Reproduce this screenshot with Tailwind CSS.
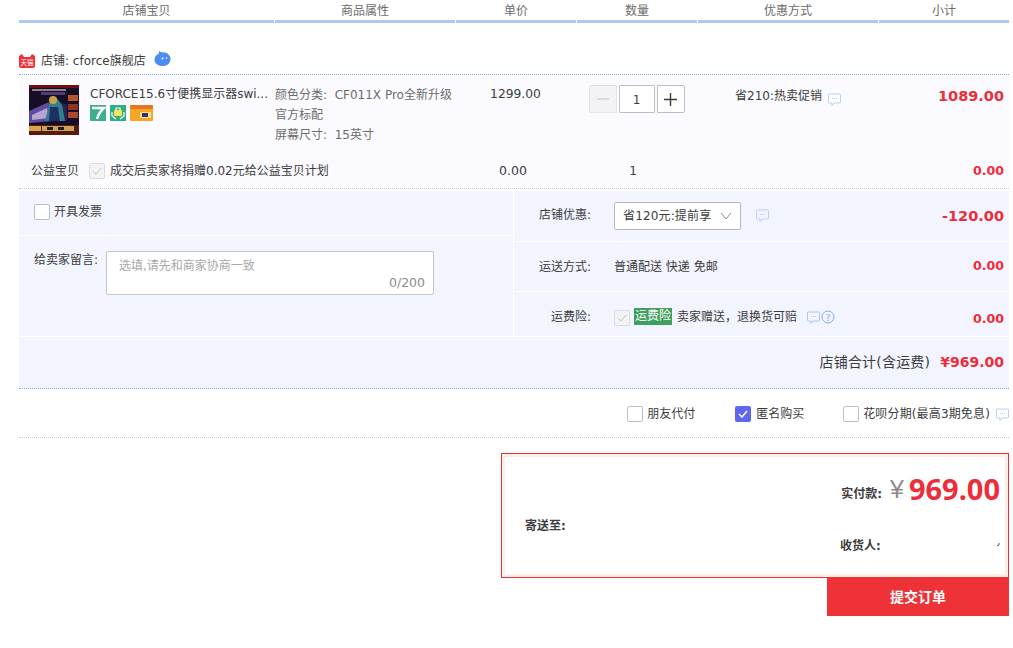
<!DOCTYPE html>
<html lang="en">
<head>
  <meta charset="UTF-8">
  <title>确认订单</title>
  <script src="https://cdn.jsdelivr.net/npm/@tailwindcss/browser@4"></script>
</head>
<body class="bg-white overflow-hidden font-['DejaVu_Sans','Noto_Sans_CJK_SC',sans-serif] text-[12px] text-[#3c3c3c]">
  <div class="w-[1013px] h-[648px] pl-[19px] pr-[4px]">

    <!-- table head -->
    <div class="flex gap-px h-[23px] text-[#6c6c6c]">
      <div class="w-[255px] h-full border-b-[3px] border-[#b2c5f9] text-center leading-[22px]">店铺宝贝</div>
      <div class="w-[180px] h-full border-b-[3px] border-[#b2c5f9] text-center leading-[22px]">商品属性</div>
      <div class="w-[120px] h-full border-b-[3px] border-[#b2c5f9] text-center leading-[22px]">单价</div>
      <div class="w-[120px] h-full border-b-[3px] border-[#b2c5f9] text-center leading-[22px]">数量</div>
      <div class="w-[180px] h-full border-b-[3px] border-[#b2c5f9] text-center leading-[22px]">优惠方式</div>
      <div class="w-[130px] h-full border-b-[3px] border-[#b2c5f9] text-center leading-[22px]">小计</div>
    </div>

    <!-- shop name -->
    <div class="flex items-center h-[52px] pt-[25px] border-b border-dotted border-[#80a0f0] text-[#3c3c3c]">
      <svg width="16" height="14" viewBox="0 0 16 14" class="mr-[6px]">
        <path d="M0 2 L3 0 L5 3 H11 L13 0 L16 2 V12 Q16 14 14 14 H2 Q0 14 0 12Z" fill="#ee3338"/>
        <text x="8" y="11" font-size="6.5" fill="#fff" text-anchor="middle">天猫</text>
      </svg>
      <span>店铺: cforce旗舰店</span>
      <svg width="17" height="17" viewBox="0 0 17 17" class="ml-[8px] -mt-[6px]">
        <path d="M5 1 Q7 2.500 9 2.200 C13 2.200 16.500 5 16.500 9 C16.500 13.500 13 16 8.500 16 C4 16 .5 13.500 .5 9.500 C.5 6.500 2.500 4.500 5 3.500Z" fill="#4f8cf0"/>
        <circle cx="8.500" cy="8.500" r="1" fill="#fff"/>
        <circle cx="12.500" cy="8" r=".8" fill="#fff"/>
      </svg>
    </div>

    <!-- item -->
    <div class="bg-[#fafaff] h-[112px] relative">
      <div class="flex h-[81px] pt-[10px]">
        <div class="w-[256px] flex pl-[10px]">
          <svg width="50" height="50" viewBox="0 0 50 50" class="shrink-0">
            <rect width="50" height="50" fill="#170d26"/>
            <rect width="50" height="3" fill="#6d0f16"/>
            <rect x="3" y="4" width="34" height="2" fill="#8f7f88"/>
            <rect x="12" y="7" width="24" height="3" fill="#4e3f78"/>
            <path d="M0 26 L20 17 L24 36 L0 38Z" fill="#5f4c9e"/>
            <path d="M3 30 L18 23 L20 33 L3 35Z" fill="#b9a4d4"/>
            <path d="M26 15 L38 20 L38 36 L26 36Z" fill="#2c2156"/>
            <path d="M16 36 L21 16 L27 12 L33 20 L36 36Z" fill="#2f7f8e"/>
            <circle cx="24" cy="15" r="4" fill="#c9a348"/>
            <path d="M21 22 L29 22 L31 36 L20 36Z" fill="#1f2f66"/>
            <rect x="39" y="10" width="10" height="6" fill="#b5562c"/>
            <rect x="39" y="19" width="10" height="6" fill="#8d3326"/>
            <rect x="39" y="27" width="10" height="6" fill="#a9482a"/>
            <rect y="40" width="50" height="10" fill="#5c1a0e"/>
            <rect y="41" width="12" height="5" fill="#d8a64a"/>
            <rect x="13" y="41" width="32" height="5" fill="#c9a35a"/>
            <rect x="18" y="42" width="6" height="3" fill="#1b1b1b"/>
            <rect x="29" y="42" width="6" height="3" fill="#1b1b1b"/>
          </svg>
          <div class="ml-[11px] min-w-0">
            <div class="leading-[18px] whitespace-nowrap">CFORCE15.6寸便携显示器swi...</div>
            <div class="flex items-start gap-[4px] mt-[2px]">
              <svg width="16" height="16" viewBox="0 0 16 16"><rect width="16" height="16" fill="#3fae8f"/><path d="M2 3 H14 Q9 7 7 14" fill="none" stroke="#fff" stroke-width="2.500"/></svg>
              <svg width="16" height="16" viewBox="0 0 16 16"><rect width="16" height="16" fill="#2fae83"/><rect x="4" y="5" width="8" height="6" rx="1" fill="#f6e35a"/><path d="M6 5 V3 H10 V5 M2 7 V11 L6 14 M14 7 V11 L10 14" fill="none" stroke="#fff" stroke-width="1.200"/></svg>
              <svg width="23" height="16" viewBox="0 0 23 16"><rect width="23" height="16" rx="1" fill="#f5a623"/><rect width="23" height="4" rx="1" fill="#e8742a"/><rect x="10" y="7" width="11" height="6" fill="#f9dd8a"/><rect x="12" y="8" width="6" height="4" fill="#33307a"/></svg>
            </div>
          </div>
        </div>
        <div class="w-[181px] text-[#6c6c6c] leading-[20px]">
          <div>颜色分类:&nbsp; CF011X Pro全新升级</div>
          <div>官方标配</div>
          <div>屏幕尺寸:&nbsp; 15英寸</div>
        </div>
        <div class="w-[121px] text-center text-[12.3px] leading-[18px] -ml-[1px]">1299.00</div>
        <div class="w-[121px] flex justify-center gap-[2px] pr-[2px] ml-[1px]">
          <div class="w-[28px] h-[28px] border border-[#e3e3e6] bg-[#f3f3f5] rounded-l-[2px] flex items-center justify-center">
            <svg width="12" height="12" viewBox="0 0 12 12"><path d="M0 6 H12" stroke="#c4c4c4" stroke-width="1"/></svg>
          </div>
          <div class="w-[36px] h-[28px] border border-[#bdbdc8] bg-white rounded-[1px] text-center leading-[28px]">1</div>
          <div class="w-[28px] h-[28px] border border-[#bdbdc8] bg-white rounded-r-[2px] flex items-center justify-center">
            <svg width="13" height="13" viewBox="0 0 13 13"><path d="M0 6.500 H13 M6.500 0 V13" stroke="#3c3c3c" stroke-width="1.400"/></svg>
          </div>
        </div>
        <div class="w-[181px] flex justify-center items-start gap-[6px] leading-[22px] pl-[9px] pr-[10px]">
          <span>省210:热卖促销</span>
          <svg width="13" height="13" viewBox="0 0 13 13" class="mt-[8px] shrink-0"><path d="M1.500 1 H11.500 Q12.500 1 12.500 2 V9 Q12.500 10 11.500 10 H6 L4 12.500 V10 H1.500 Q.5 10 .5 9 V2 Q.5 1 1.500 1Z" fill="#fff" stroke="#b8d0f5"/><path d="M4 5.500 H9" stroke="#b8d0f5" stroke-dasharray="1 1"/></svg>
        </div>
        <div class="flex-1 text-right pr-[5px] font-bold text-[14.5px] text-[#ee2d3a] leading-[22px]">1089.00</div>
      </div>
      <div class="flex items-center h-[30px]">
        <div class="w-[70px] pl-[12px] whitespace-nowrap">公益宝贝</div>
        <div class="w-[16px] h-[16px] border border-[#dcdce0] bg-[#f3f3f5] rounded-[2px] flex items-center justify-center">
          <svg width="10" height="8" viewBox="0 0 10 8"><path d="M1 4 L4 7 L9 1" fill="none" stroke="#c4c4c4" stroke-width="1"/></svg>
        </div>
        <div class="w-[375px] pl-[5px] whitespace-nowrap">成交后卖家将捐赠0.02元给公益宝贝计划</div>
        <div class="w-[70px] text-center text-[12.5px] -ml-[2px]">0.00</div>
        <div class="w-[170px] text-center">1</div>
        <div class="flex-1 text-right pr-[5px] font-bold text-[12.6px] text-[#ee2d3a]">0.00</div>
      </div>
    </div>

    <div class="border-b border-dotted border-[#c8c8c8] h-[2px]"></div>

    <!-- order options -->
    <div class="flex mt-[2px] h-[145px] bg-[#f2f4ff]">
      <div class="w-[495px] border-r border-white flex flex-col">
        <div class="h-[45px] flex items-start pl-[15px] pt-[13px] border-b border-white">
          <div class="w-[16px] h-[16px] border border-[#bdbdc8] bg-white rounded-[2px]"></div>
          <span class="ml-[4px] leading-[16px]">开具发票</span>
        </div>
        <div class="flex pl-[15px] pt-[15px]">
          <span class="w-[72px] leading-[18px]">给卖家留言:</span>
          <div class="relative w-[328px] h-[44px] bg-white border border-[#c4c4c4] rounded-[2px]">
            <span class="absolute left-[12px] top-[5px] text-[#a8a8a8]">选填,请先和商家协商一致</span>
            <span class="absolute right-[8px] bottom-[1px] text-[12.5px] text-[#8c8c8c]">0/200</span>
          </div>
        </div>
      </div>
      <div class="flex-1 flex flex-col">
        <div class="h-[51px] flex items-center border-b border-white">
          <span class="w-[77px] text-right mb-[2px]">店铺优惠:</span>
          <div class="ml-[23px] w-[127px] h-[28px] border border-[#b8b8c8] bg-white rounded-[2px] flex items-center justify-between pl-[8px] pr-[8px]">
            <span class="whitespace-nowrap tracking-[.15px]">省120元:提前享</span>
            <svg width="12" height="8" viewBox="0 0 12 8"><path d="M1 1 L6 7 L11 1" fill="none" stroke="#8c8c8c"/></svg>
          </div>
          <svg width="13" height="13" viewBox="0 0 13 13" class="ml-[15px] -mt-[1px]"><path d="M1.500 1 H11.500 Q12.500 1 12.500 2 V9 Q12.500 10 11.500 10 H6 L4 12.500 V10 H1.500 Q.5 10 .5 9 V2 Q.5 1 1.500 1Z" fill="none" stroke="#b8d0f5"/><path d="M4 5.500 H9" stroke="#b8d0f5" stroke-dasharray="1 1"/></svg>
          <span class="ml-auto pr-[5px] font-bold text-[14.5px] text-[#ee2d3a] mt-[2px]">-120.00</span>
        </div>
        <div class="h-[50px] flex items-center border-b border-white">
          <span class="w-[77px] text-right">运送方式:</span>
          <span class="ml-[23px]">普通配送 快递 免邮</span>
          <span class="ml-auto pr-[5px] font-bold text-[12.6px] text-[#ee2d3a]">0.00</span>
        </div>
        <div class="flex-1 flex items-center pt-[6px]">
          <span class="w-[77px] text-right">运费险:</span>
          <div class="ml-[23px] mt-[2px] w-[16px] h-[16px] border border-[#dcdce0] bg-[#f3f3f5] rounded-[2px] flex items-center justify-center">
            <svg width="10" height="8" viewBox="0 0 10 8"><path d="M1 4 L4 7 L9 1" fill="none" stroke="#c4c4c4" stroke-width="1"/></svg>
          </div>
          <span class="ml-[4px] px-px bg-[#3f9f5f] text-white leading-[17px] h-[17px] -mt-[1px]">运费险</span>
          <span class="ml-[5px] whitespace-nowrap">卖家赠送，退换货可赔</span>
          <svg width="13" height="13" viewBox="0 0 13 13" class="ml-[10px]"><path d="M1.500 1 H11.500 Q12.500 1 12.500 2 V9 Q12.500 10 11.500 10 H6 L4 12.500 V10 H1.500 Q.5 10 .5 9 V2 Q.5 1 1.500 1Z" fill="none" stroke="#a8c4f0"/><path d="M4 5.500 H9" stroke="#a8c4f0" stroke-dasharray="1 1"/></svg>
          <svg width="14" height="14" viewBox="0 0 14 14" class="ml-[1px]"><circle cx="7" cy="7" r="6" fill="none" stroke="#7fa8ee" stroke-width="1"/><text x="7" y="10.500" font-size="9.500" fill="#7fa8ee" text-anchor="middle">?</text></svg>
          <span class="ml-auto pr-[5px] font-bold text-[12.6px] text-[#ee2d3a] mt-[4px]">0.00</span>
        </div>
      </div>
    </div>

    <!-- shop total -->
    <div class="h-[52px] bg-[#f2f4ff] border-t border-white flex items-center justify-end pr-[5px]">
      <span class="text-[14px] tracking-[.2px]">店铺合计(含运费)</span>
      <span class="ml-[10px] font-bold text-[14px] text-[#ee2d3a]">¥969.00</span>
    </div>
    <div class="border-t border-dotted border-[#80a0f0]"></div>

    <!-- pay options -->
    <div class="h-[49px] pt-[2px] border-b border-dotted border-[#c8c8c8] flex items-center justify-end">
      <div class="w-[16px] h-[16px] border border-[#bdbdc8] bg-white rounded-[2px]"></div>
      <span class="ml-[4px]">朋友代付</span>
      <div class="ml-[40px] w-[16px] h-[16px] bg-[#5f67f2] rounded-[2px] flex items-center justify-center">
        <svg width="10" height="8" viewBox="0 0 10 8"><path d="M1 4 L4 7 L9 1" fill="none" stroke="#fff" stroke-width="1.500"/></svg>
      </div>
      <span class="ml-[5px]">匿名购买</span>
      <div class="ml-[39px] w-[16px] h-[16px] border border-[#bdbdc8] bg-white rounded-[2px]"></div>
      <span class="ml-[4px] whitespace-nowrap tracking-[.15px]">花呗分期(最高3期免息)</span>
      <svg width="13" height="13" viewBox="0 0 13 13" class="ml-[6px]"><path d="M1.500 1 H11.500 Q12.500 1 12.500 2 V9 Q12.500 10 11.500 10 H6 L4 12.500 V10 H1.500 Q.5 10 .5 9 V2 Q.5 1 1.500 1Z" fill="#fff" stroke="#b8d0f5"/><path d="M4 5.500 H9" stroke="#b8d0f5" stroke-dasharray="1 1"/></svg>
    </div>

    <!-- pay box -->
    <div class="flex flex-col items-end mt-[15px]">
      <div class="w-[508px] h-[125px] border border-[#ee2d3a] bg-white">
        <div class="h-full border-[3px] border-[#fbeee5] relative">
          <div class="absolute left-[20px] top-[60px] font-bold text-[12px] text-[#3c3c3c]">寄送至:</div>
          <div class="absolute right-[5px] top-[16px] flex items-center">
            <span class="font-bold text-[12px] mt-[10px]">实付款:</span>
            <span class="ml-[8px] font-['Liberation_Sans'] text-[25px] leading-[32px] text-[#8c8c8c]">¥</span>
            <span class="ml-[5px] font-['Noto_Sans'] text-[29px] leading-[32px] font-bold text-[#ee2d3a]">969.00</span>
          </div>
          <div class="absolute left-[335px] top-[80px] font-bold text-[12px]">收货人:</div>
          <svg width="4" height="4" viewBox="0 0 4 4" class="absolute left-[491px] top-[86px]"><path d="M3 0 V2 L1 3" fill="none" stroke="#555"/></svg>
        </div>
      </div>
      <button class="w-[182px] h-[38px] bg-[#ee3338] text-white font-bold text-[14px]">提交订单</button>
    </div>
  </div>
</body>
</html>
